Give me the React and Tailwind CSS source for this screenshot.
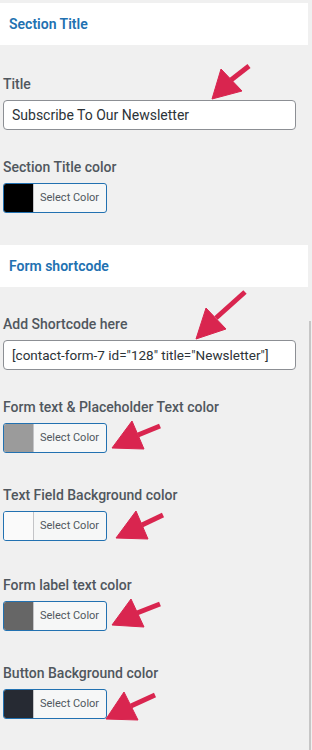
import React from 'react';

const font = { fontFamily: 'Roboto, "Liberation Sans", sans-serif' };

const Panel = ({ title, className = '' }) => (
  <div className={`bg-white w-[308px] h-[42px] flex items-center pl-[9px] ${className}`}>
    <span className="text-[14px] font-semibold text-[#2271b1]">{title}</span>
  </div>
);

const Label = ({ children }) => (
  <div className="h-[20px] leading-[20px] mb-[6px] pl-[3px] text-[14px] font-medium text-[#50575e]">
    {children}
  </div>
);

const TextField = ({ label, value, className = '', textSize = 'text-[14px]' }) => (
  <div className={className}>
    <Label>{label}</Label>
    <div className={`ml-[3px] w-[293px] h-[30px] border border-[#8c8f94] rounded-[4px] bg-white flex items-center pl-[8px] text-[#2c3338] whitespace-nowrap overflow-hidden ${textSize}`}>
      {value}
    </div>
  </div>
);

const ColorField = ({ label, swatch, className = '' }) => (
  <div className={className}>
    <Label>{label}</Label>
    <div className="ml-[3px] w-[104px] h-[30px] border border-[#2271b1] rounded-[3px] bg-[#f6f7f7] flex overflow-hidden">
      <div className={`w-[30px] h-full border-r border-[#c3c4c7] ${swatch}`} />
      <div className="flex-1 flex items-center pl-[6px] text-[11px] text-[#50575e]">Select Color</div>
    </div>
  </div>
);

// arrows: tail, base-mid, tip, corners
const arrows = [
  [[249, 66], [231, 80], [212, 99], [221, 69], [242, 91]],
  [[245, 292], [216, 318], [196, 339], [206, 308], [226, 329]],
  [[160, 426], [138, 435], [112, 448], [132, 421], [144, 449]],
  [[163, 515], [142, 525], [116, 538], [136, 511], [148, 539]],
  [[160, 604], [137, 613], [112, 625], [131, 599], [144, 627]],
  [[155, 695], [131, 706], [106, 719], [124, 692], [138, 720]],
];

const Arrows = () => (
  <svg className="absolute left-0 top-0 pointer-events-none" width="312" height="750" viewBox="0 0 312 750">
    {arrows.map(([tail, mid, tip, c1, c2], i) => (
      <g key={i} fill="#d9254f" stroke="#d9254f">
        <line x1={tail[0]} y1={tail[1]} x2={mid[0]} y2={mid[1]} strokeWidth="5" />
        <polygon points={`${tip[0]},${tip[1]} ${c1[0]},${c1[1]} ${c2[0]},${c2[1]}`} strokeWidth="1" strokeLinejoin="round" />
      </g>
    ))}
  </svg>
);

export default function App() {
  return (
    <div className="relative w-[312px] h-[750px] bg-[#f0f0f0] overflow-hidden pt-[3px]" style={font}>
      <Panel title="Section Title" />
      <TextField className="mt-[29px]" label="Title" value="Subscribe To Our Newsletter" />
      <ColorField className="mt-[27px]" label="Section Title color" swatch="bg-black" />
      <Panel className="mt-[32px]" title="Form shortcode" />
      <TextField
        className="mt-[27px]"
        label="Add Shortcode here"
        textSize="text-[13.5px]"
        value={'[contact-form-7 id="128" title="Newsletter"]'}
      />
      <ColorField className="mt-[27px]" label="Form text & Placeholder Text color" swatch="bg-[#9b9b9b]" />
      <ColorField className="mt-[32px]" label="Text Field Background color" swatch="bg-[#fafafa]" />
      <ColorField className="mt-[34px]" label="Form label text color" swatch="bg-[#666666]" />
      <ColorField className="mt-[32px]" label="Button Background color" swatch="bg-[#262a33]" />
      <div className="absolute right-[1px] top-[321px] bottom-0 w-[2px] bg-[#c6c6c6]" />
      <Arrows />
    </div>
  );
}
